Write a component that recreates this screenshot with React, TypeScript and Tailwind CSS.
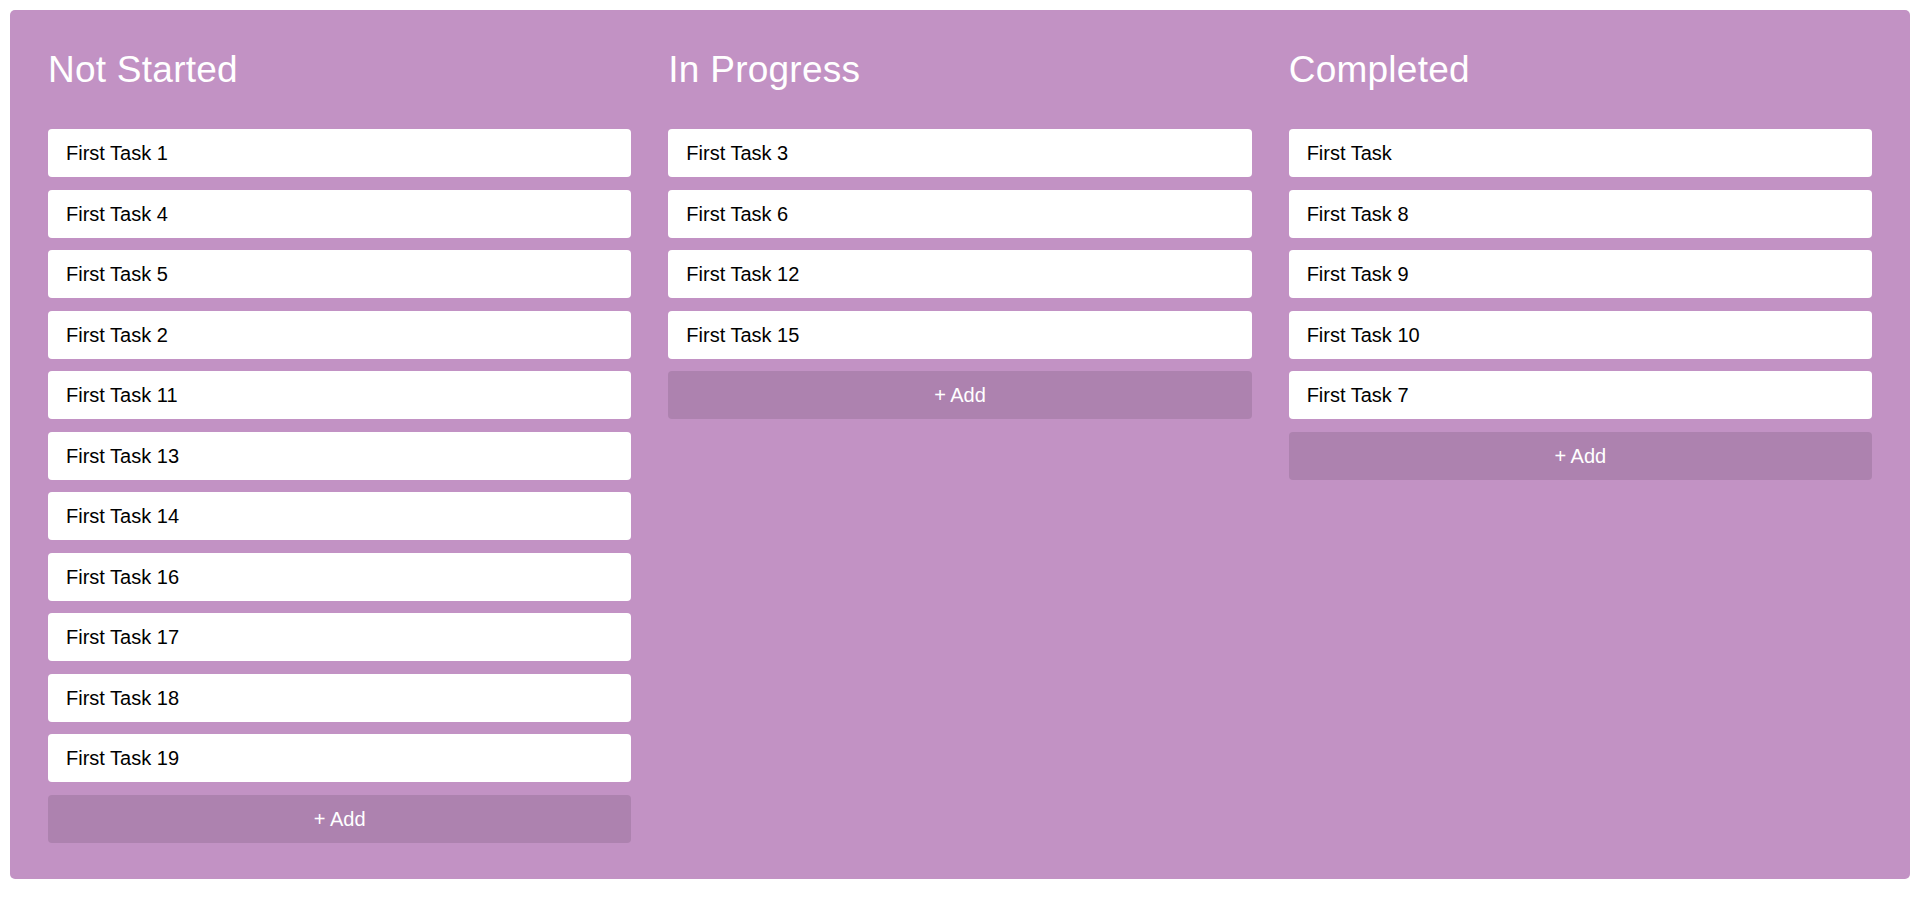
const columns = [
  {
    title: "Not Started",
    tasks: [
      "First Task 1",
      "First Task 4",
      "First Task 5",
      "First Task 2",
      "First Task 11",
      "First Task 13",
      "First Task 14",
      "First Task 16",
      "First Task 17",
      "First Task 18",
      "First Task 19",
    ],
  },
  {
    title: "In Progress",
    tasks: ["First Task 3", "First Task 6", "First Task 12", "First Task 15"],
  },
  {
    title: "Completed",
    tasks: ["First Task", "First Task 8", "First Task 9", "First Task 10", "First Task 7"],
  },
];

function Column({ title, tasks }: { title: string; tasks: string[] }) {
  return (
    <div className="flex flex-col">
      <h2 className="mb-[39px] text-[37px] leading-[41px] font-normal tracking-[0.25px] text-white">
        {title}
      </h2>
      <div className="flex flex-col gap-[12.5px]">
        {tasks.map((task) => (
          <div
            key={task}
            className="flex h-[48px] items-center rounded-[4px] bg-white px-[18px] text-[20px] text-black"
          >
            {task}
          </div>
        ))}
        <button className="flex h-[48px] items-center justify-center rounded-[4px] bg-[#ad82af] text-[20px] text-white">
          + Add
        </button>
      </div>
    </div>
  );
}

export default function App() {
  return (
    <div
      className="min-h-[913px] bg-white p-[10px]"
      style={{ fontFamily: '"Liberation Sans", Arial, sans-serif' }}
    >
      <div className="grid h-[869px] grid-cols-3 items-start gap-[37px] rounded-[5px] bg-[#c292c4] px-[38px] pt-[39px]">
        {columns.map((col) => (
          <Column key={col.title} title={col.title} tasks={col.tasks} />
        ))}
      </div>
    </div>
  );
}
